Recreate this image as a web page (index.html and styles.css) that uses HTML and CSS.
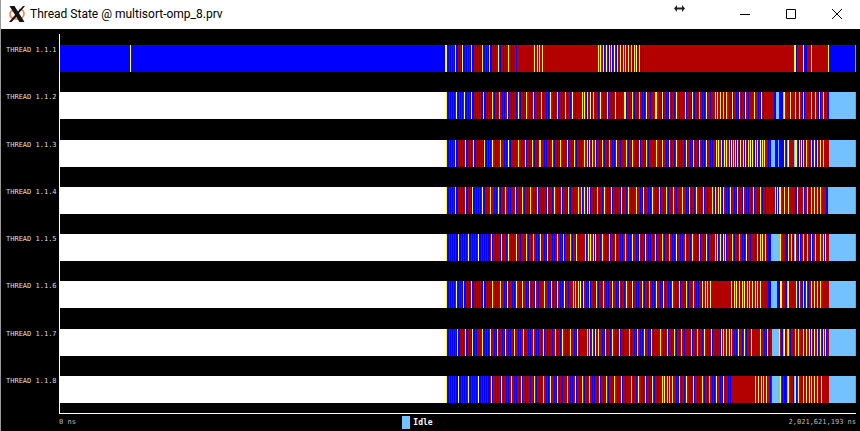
FILE: index.html
```html
<!DOCTYPE html>
<html lang="en">
<head>
<meta charset="utf-8">
<title>Thread State @ multisort-omp_8.prv</title>
<link rel="stylesheet" href="styles.css">
</head>
<body>
<div class="window">
  <header class="titlebar">
    <svg class="logo" viewBox="0 0 16 16" aria-hidden="true">
      <path d="M10 3.500C13 3.200 15 5 15 7.700C15 11 11.700 13 7.800 13C4 12.900 1 11.200 1 8.200C1 6 2.800 4.500 4.500 4.200" fill="none" stroke="#ee8450" stroke-width="1.600"/>
      <path d="M0.500 0H5.500L15.500 16H10.500Z" fill="#111"/>
      <path d="M14 0H16L9.400 7.800L8.200 6.200ZM6.600 8.200L7.900 10.200L2.600 16H0Z" fill="#111"/>
    </svg>
    <h1 class="title">Thread State @ multisort-omp_8.prv</h1>
    <svg class="pointer" viewBox="0 0 11 7" aria-hidden="true">
      <path d="M0 3.500L3 0V2.500H8V0L11 3.500L8 7V4.500H3V7Z" fill="#222"/>
    </svg>
    <button class="control" type="button" aria-label="Minimize"><svg viewBox="0 0 10 10"><path d="M0 5.500H10"/></svg></button>
    <button class="control" type="button" aria-label="Maximize"><svg viewBox="0 0 10 10"><path d="M0.500 0.500H9.500V9.500H0.500Z"/></svg></button>
    <button class="control" type="button" aria-label="Close"><svg viewBox="0 0 10 10"><path d="M0 0L10 10M10 0L0 10"/></svg></button>
  </header>
  <main class="timeline">
    <div class="rows" id="rows"></div>
    <footer class="footer">
      <span class="time">0 ns</span>
      <span class="legend"><span class="swatch"></span>Idle</span>
      <span class="time end">2,021,621,193 ns</span>
    </footer>
  </main>
</div>
<script src="timeline.js"></script>
</body>
</html>
```
FILE: styles.css
```css
* { box-sizing: border-box; }
body {
  margin: 0;
  background: #000;
}
.window {
  display: flex;
  flex-direction: column;
  min-height: 100vh;
  border-left: 1px solid #999;
}
.titlebar {
  position: relative;
  display: flex;
  align-items: center;
  height: 29px;
  padding: 0 0 2px 8px;
  background: #fff;
  color: #000;
}
.logo {
  width: 16px;
  height: 16px;
  margin-right: 5px;
}
.title {
  flex: 1;
  margin: 0;
  font: 400 12px/16px Roboto, "Open Sans", sans-serif;
}
.pointer {
  position: absolute;
  top: 5px;
  right: 175px;
  width: 11px;
  height: 7px;
}
.control {
  display: grid;
  place-items: center;
  width: 46px;
  height: 26px;
  padding: 0;
  border: 0;
  background: none;
}
.control svg {
  width: 10px;
  height: 10px;
  fill: none;
  stroke: #000;
  stroke-width: 1;
}
.timeline {
  flex: 1;
  display: flex;
  flex-direction: column;
  padding: 5px 4px 0 5px;
  font-family: "DejaVu Sans Mono", monospace;
  color: #ddd;
}
.rows {
  flex: 1;
  display: grid;
  grid-template-columns: 53px 1fr;
  grid-template-rows: repeat(8, 1fr) 1px;
}
.label {
  grid-column: 1;
  padding-top: 12px;
  font-size: 7px;
  line-height: 8px;
  white-space: nowrap;
}
.track {
  grid-column: 2;
  padding-top: 11px;
  border-left: 1px solid #fff;
}
.label:nth-last-child(2) { grid-row: 8; }
.track:last-child { grid-row: 8 / 10; }
.track svg {
  display: block;
  width: 100%;
  height: 27px;
}
.footer {
  display: grid;
  grid-template-columns: 1fr auto 1fr;
  height: 18px;
  margin-left: 53px;
  border-top: 1px solid #fff;
}
.time {
  padding-top: 4px;
  font-size: 7px;
  line-height: 8px;
  color: #bbb;
}
.end { text-align: right; }
.legend {
  display: flex;
  align-items: center;
  gap: 3px;
  margin-right: 80px;
  font-size: 8px;
  font-weight: 700;
  line-height: 12px;
  color: #fff;
}
.swatch {
  width: 8px;
  height: 13px;
  background: #73c2ff;
}
```
FILE: timeline.js
```js
const SPAN = 796;
const COLORS = { r: "#b30000", b: "#0000ff", y: "#ffff00", p: "#ffff80", i: "#73c2ff", w: "#ffffff", o: "#a3a344" };

// sync: instants of scheduling; blocks: [state, first, last] intervals.
const threads = [
  { sync: [385,386,395,402,411,422,429,438,448,474,477,479,482,538,540,543,546,549,551,554,557,560,563,565,568,571,574,576,579,734,735,743,751,768],
    blocks: [["b",0,384],["r",459,473],["r",484,537],["r",582,733],["b",736,736],["r",737,742],["b",744,744],["b",746,746],["r",747,750],["r",752,767],["b",769,794]] },
  { sync: [386,396,404,411,423,432,439,447,458,466,473,481,490,497,505,512,522,524,527,530,533,540,547,555,564,565,572,579,586,595,596,602,609,616,625,632,639,646,655,657,660,663,666,672,679,685,694,701,724,730,735,739,743,751,755,759,763],
    blocks: [["r",517,521],["r",560,563],["r",591,594],["r",621,624],["r",651,654],["r",690,693],["r",706,711],["b",714,715],["i",716,718],["b",719,722],["i",723,723],["r",726,728],["r",732,734],["r",747,750],["b",767,768]] },
  { sync: [386,395,405,413,424,432,440,448,458,465,472,479,480,492,500,507,514,524,527,529,532,535,542,549,556,566,572,579,586,596,602,609,616,626,633,639,646,656,658,661,664,666,669,671,673,675,677,680,683,685,688,690,692,695,697,700,702,704,724,728,735,736,739,741,743,746,751,754,757,760,763],
    blocks: [["r",453,456],["r",561,565],["r",591,594],["i",711,714],["b",715,717],["i",718,718],["b",719,723],["i",727,727],["r",731,733],["i",734,734],["r",764,768]] },
  { sync: [386,395,405,412,422,430,438,445,455,462,470,477,487,494,501,508,518,521,524,527,529,537,544,551,561,568,576,583,592,599,606,613,622,629,636,643,652,655,658,660,663,670,677,683,693,700,715,717,719,720,724,728,737,743,747,751,754,757,760],
    blocks: [["r",425,428],["r",451,454],["r",514,517],["r",618,621],["r",648,651],["r",706,714],["b",716,716],["b",718,718],["r",729,734],["b",735,736],["r",739,742],["r",763,765],["b",766,767],["i",768,768]] },
  { sync: [386,398,408,418,431,441,448,456,466,473,480,487,497,503,510,516,525,528,530,533,535,542,549,555,565,572,579,585,595,602,609,616,625,632,639,646,655,657,660,663,665,672,679,686,697,700,702,705,720,728,731,735,739,743,747,751,755,760,763,765],
    blocks: [["r",461,464],["r",521,524],["r",691,694],["b",708,710],["i",711,719],["r",722,724],["b",725,727],["i",734,734],["r",757,759],["r",767,768]] },
  { sync: [386,396,403,411,423,432,440,447,456,462,469,475,484,491,497,504,513,515,518,520,523,529,536,543,552,559,566,572,582,589,596,603,612,619,626,633,642,645,647,650,671,674,676,679,682,684,687,689,692,695,697,700,720,721,728,736,739,743,746,751,754,757,760],
    blocks: [["r",479,483],["r",509,512],["r",651,670],["r",701,707],["b",708,710],["i",711,716],["b",717,719],["r",722,724],["b",725,726],["i",727,727],["r",731,734],["r",763,768]] },
  { sync: [386,397,405,412,422,430,437,445,454,463,473,483,495,502,510,517,527,529,532,535,538,545,552,559,569,577,584,591,600,607,614,621,631,637,644,651,661,663,666,669,671,678,684,691,700,707,719,724,728,735,738,743,746,749,751,754,757,760,763,765],
    blocks: [["r",417,421],["r",522,525],["r",565,568],["r",596,599],["r",626,629],["r",694,699],["i",712,718],["b",721,722],["i",723,723],["i",727,727],["r",739,742],["r",767,768]] },
  { sync: [386,398,408,418,431,441,451,461,474,483,490,497,507,515,522,529,539,546,554,561,571,578,585,592,602,604,607,609,612,619,626,633,642,649,656,663,695,698,701,703,706,720,728,735,738,743,746,749,751,754,757,761],
    blocks: [["r",503,506],["r",566,570],["r",598,600],["r",671,694],["i",712,719],["b",724,726],["i",727,727],["i",734,734],["r",739,742],["r",763,768]] }
];

function statesOf(thread, index) {
  const cells = new Array(SPAN).fill("w");
  const early = "bbrbrbrbr";
  const later = ["brrbrbrr", "rbrrbrbr", "rrbrbrrb"];
  let since = 0;
  let gap = 0;
  const sync = new Set(thread.sync);
  for (let x = 386; x < 769; x++) {
    if (sync.has(x)) { since = 0; gap++; continue; }
    const pattern = x < 432 ? early : later[(gap + index) % 3];
    cells[x] = pattern[since % pattern.length];
    since++;
  }
  cells.fill("i", 769, 795);
  thread.blocks.forEach(([state, from, to]) => cells.fill(state, from, to + 1));
  thread.sync.forEach((x, i) => { cells[x] = i % 4 === 3 ? "p" : "y"; });
  if (index === 0) cells[70] = "y";
  cells[795] = "o";
  return cells;
}

function drawTrack(cells) {
  let rects = "";
  for (let start = 0; start < SPAN;) {
    let end = start + 1;
    while (end < SPAN && cells[end] === cells[start]) end++;
    rects += `<rect x="${start}" width="${end - start}" height="27" fill="${COLORS[cells[start]]}"/>`;
    start = end;
  }
  return `<svg viewBox="0 0 ${SPAN} 27" preserveAspectRatio="none" shape-rendering="crispEdges" role="img">${rects}</svg>`;
}

document.getElementById("rows").innerHTML = threads.map((thread, i) =>
  `<div class="label">THREAD 1.1.${i + 1}</div><div class="track">${drawTrack(statesOf(thread, i))}</div>`
).join("");
```
